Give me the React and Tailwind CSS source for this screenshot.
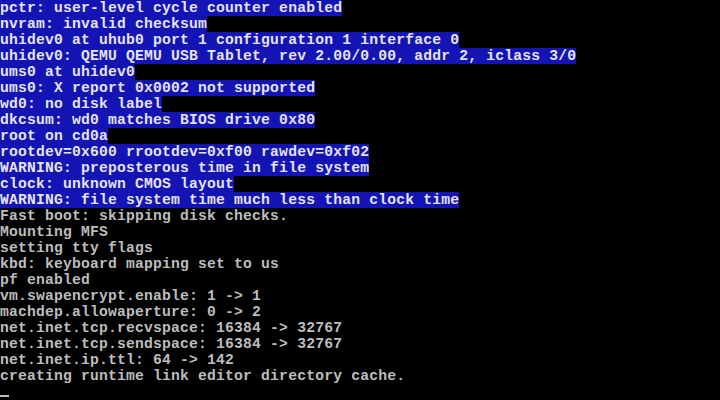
import React from "react";

const lines = [
  ["pctr: user-level cycle counter enabled", true],
  ["nvram: invalid checksum", true],
  ["uhidev0 at uhub0 port 1 configuration 1 interface 0", true],
  ["uhidev0: QEMU QEMU USB Tablet, rev 2.00/0.00, addr 2, iclass 3/0", true],
  ["ums0 at uhidev0", true],
  ["ums0: X report 0x0002 not supported", true],
  ["wd0: no disk label", true],
  ["dkcsum: wd0 matches BIOS drive 0x80", true],
  ["root on cd0a", true],
  ["rootdev=0x600 rrootdev=0xf00 rawdev=0xf02", true],
  ["WARNING: preposterous time in file system", true],
  ["clock: unknown CMOS layout", true],
  ["WARNING: file system time much less than clock time", true],
  ["Fast boot: skipping disk checks.", false],
  ["Mounting MFS", false],
  ["setting tty flags", false],
  ["kbd: keyboard mapping set to us", false],
  ["pf enabled", false],
  ["vm.swapencrypt.enable: 1 -> 1", false],
  ["machdep.allowaperture: 0 -> 2", false],
  ["net.inet.tcp.recvspace: 16384 -> 32767", false],
  ["net.inet.tcp.sendspace: 16384 -> 32767", false],
  ["net.inet.ip.ttl: 64 -> 142", false],
  ["creating runtime link editor directory cache.", false],
];

export default function App() {
  return (
    <div
      className="w-[720px] h-[400px] bg-black overflow-hidden text-[14.7px] tracking-[0.19px] leading-[16px] font-bold whitespace-pre"
      style={{ fontFamily: '"Liberation Mono", "DejaVu Sans Mono", monospace' }}
    >
      {lines.map(([text, hl], i) => (
        <div key={i} className="h-4">
          {hl ? (
            <span className="inline-block h-4 bg-[#1414b4] text-[#e4e4f0]">{text}</span>
          ) : (
            <span className="text-[#bdbdbd]">{text}</span>
          )}
        </div>
      ))}
      {/* cursor */}
      <div className="h-4 flex items-end pb-[3px]">
        <div className="w-[9px] h-[2px] bg-[#bdbdbd]" />
      </div>
    </div>
  );
}
